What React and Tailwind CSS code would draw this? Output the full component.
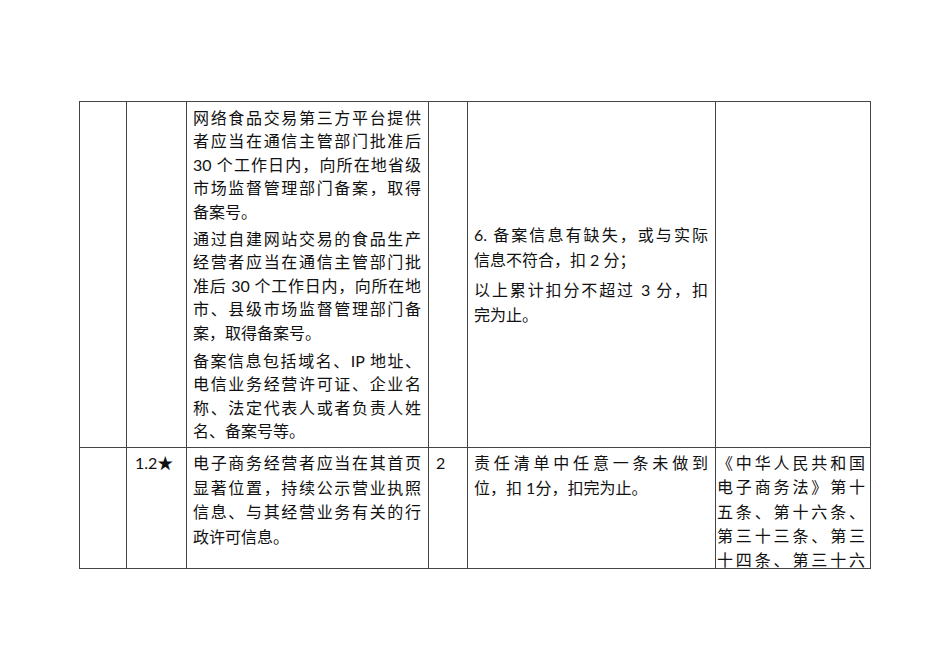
const font = { fontFamily: 'Lato, "Noto Sans CJK SC", sans-serif' };

function Lines({ lines, lh, last = true }) {
  return (
    <div>
      {lines.map((l, i) => {
        const full = !(last && i === lines.length - 1);
        return (
          <div
            key={i}
            className={full ? 'text-justify [text-align-last:justify] whitespace-nowrap' : 'text-left whitespace-nowrap'}
            style={{ lineHeight: lh }}
          >
            {l}
          </div>
        );
      })}
    </div>
  );
}

const p1 = ['网络食品交易第三方平台提供', '者应当在通信主管部门批准后', '30 个工作日内，向所在地省级', '市场监督管理部门备案，取得', '备案号。'];
const p2 = ['通过自建网站交易的食品生产', '经营者应当在通信主管部门批', '准后 30 个工作日内，向所在地', '市、县级市场监督管理部门备', '案，取得备案号。'];
const p3 = ['备案信息包括域名、IP 地址、', '电信业务经营许可证、企业名', '称、法定代表人或者负责人姓', '名、备案号等。'];

export default function App() {
  return (
    <div className="w-[950px] h-[672px] bg-white text-[16px] text-[#111]" style={font}>
      <div className="pt-[101px] pl-[79px]">
        <div className="grid grid-cols-[47px_60px_242px_39px_248px_155px] grid-rows-[346px_121px] border-t border-l border-[#444] w-[792px]">
          <div className="border-r border-b border-[#444]" />
          <div className="border-r border-b border-[#444]" />
          <div className="border-r border-b border-[#444] pl-[6px] pr-[7px] pt-[4px]">
            <Lines lines={p1} lh="23.4px" />
            <div className="mt-[4px]"><Lines lines={p2} lh="23.4px" /></div>
            <div className="mt-[5px]"><Lines lines={p3} lh="23.4px" /></div>
          </div>
          <div className="border-r border-b border-[#444]" />
          <div className="border-r border-b border-[#444] pl-[6px] pr-[7px] flex flex-col justify-center">
            <Lines lines={['6. 备案信息有缺失，或与实际', '信息不符合，扣 2 分；']} lh="25px" />
            <div className="mt-[5px]"><Lines lines={['以上累计扣分不超过 3 分，扣', '完为止。']} lh="25px" /></div>
          </div>
          <div className="border-r border-b border-[#444]" />

          <div className="border-r border-b border-[#444]" />
          <div className="border-r border-b border-[#444] pl-[8px] pt-[3px] leading-[24.5px]">1.2★</div>
          <div className="border-r border-b border-[#444] pl-[6px] pr-[7px] pt-[3px]">
            <Lines lines={['电子商务经营者应当在其首页', '显著位置，持续公示营业执照', '信息、与其经营业务有关的行', '政许可信息。']} lh="24.5px" />
          </div>
          <div className="border-r border-b border-[#444] pl-[7px] pt-[3px] leading-[24.5px]">2</div>
          <div className="border-r border-b border-[#444] pl-[6px] pr-[7px] pt-[3px]">
            <Lines lines={['责任清单中任意一条未做到', '位，扣 1分，扣完为止。']} lh="24.5px" />
          </div>
          <div className="border-r border-b border-[#444] pl-[1px] pr-[5px] pt-[3px] overflow-hidden">
            <Lines lines={['《中华人民共和国', '电子商务法》第十', '五条、第十六条、', '第三十三条、第三', '十四条、第三十六']} lh="24.3px" last={false} />
          </div>
        </div>
      </div>
    </div>
  );
}
